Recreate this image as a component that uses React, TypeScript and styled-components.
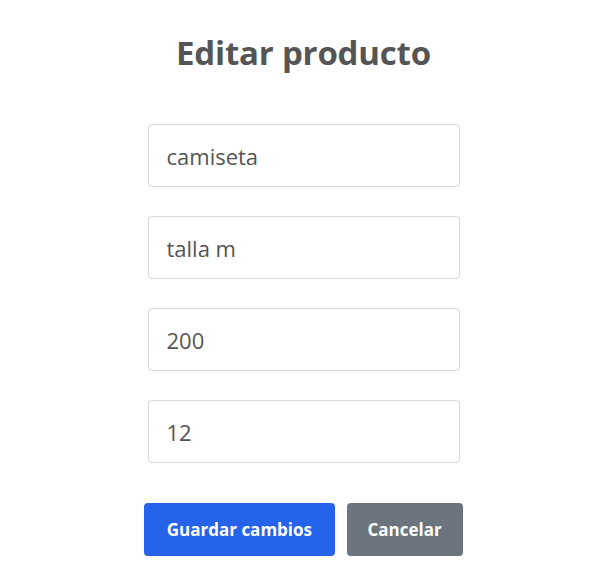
import React from 'react';
import styled, { createGlobalStyle } from 'styled-components';

const GlobalStyle = createGlobalStyle`
  body {
    margin: 0;
    background: #ffffff;
    font-family: 'Open Sans', 'Noto Sans', sans-serif;
  }
`;

const Page = styled.div`
  display: flex;
  flex-direction: column;
  align-items: center;
  padding: 28px 4px 0 0;
`;

const Title = styled.h2`
  margin: 0 0 46px;
  font-size: 33px;
  font-weight: 700;
  letter-spacing: -0.2px;
  color: #555555;
  line-height: 50px;
`;

const Form = styled.form`
  display: flex;
  flex-direction: column;
  align-items: center;
  gap: 29px;
`;

const Field = styled.input`
  box-sizing: border-box;
  width: 312px;
  height: 63px;
  padding: 0 18px;
  border: 1px solid #d6d6d6;
  border-radius: 4px;
  font-family: inherit;
  font-size: 22px;
  color: #555555;
  outline: none;
`;

const Actions = styled.div`
  display: flex;
  gap: 12px;
  margin-top: 11px;
`;

const Button = styled.button<{ $variant: 'primary' | 'secondary' }>`
  height: 53px;
  padding: 0 ${(p) => (p.$variant === 'primary' ? '22.5px' : '21px')};
  border: none;
  border-radius: 4px;
  font-family: inherit;
  font-size: 17px;
  font-weight: 700;
  color: #ffffff;
  background: ${(p) => (p.$variant === 'primary' ? '#2563eb' : '#6c757d')};
  cursor: pointer;
`;

const fields = ['camiseta', 'talla m', '200', '12'];

export default function App() {
  return (
    <>
      <GlobalStyle />
      <Page>
        <Title>Editar producto</Title>
        <Form onSubmit={(e) => e.preventDefault()}>
          {fields.map((v) => (
            <Field key={v} defaultValue={v} />
          ))}
          <Actions>
            <Button type="submit" $variant="primary">Guardar cambios</Button>
            <Button type="button" $variant="secondary">Cancelar</Button>
          </Actions>
        </Form>
      </Page>
    </>
  );
}
